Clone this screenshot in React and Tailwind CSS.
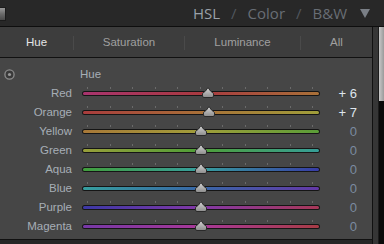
import React from "react";

const rows = [
  { name: "Red", value: 6, grad: "bg-[linear-gradient(90deg,#a8346e,#a83a40,#a87038)]" },
  { name: "Orange", value: 7, grad: "bg-[linear-gradient(90deg,#a83c3c,#a87038,#a09e3a)]" },
  { name: "Yellow", value: 0, grad: "bg-[linear-gradient(90deg,#a87838,#a09e3a,#5a9e38)]" },
  { name: "Green", value: 0, grad: "bg-[linear-gradient(90deg,#989e3a,#4e9e38,#369e98)]" },
  { name: "Aqua", value: 0, grad: "bg-[linear-gradient(90deg,#429e3c,#369e9e,#383ca6)]" },
  { name: "Blue", value: 0, grad: "bg-[linear-gradient(90deg,#369e9e,#3866a6,#6438a6)]" },
  { name: "Purple", value: 0, grad: "bg-[linear-gradient(90deg,#3c38a6,#8238a6,#a83858)]" },
  { name: "Magenta", value: 0, grad: "bg-[linear-gradient(90deg,#7638a6,#a83898,#a83c46)]" },
];

const Thumb = ({ value }) => (
  <svg
    className="absolute top-[3px]"
    style={{ left: 113 + (value / 100) * 119 }}
    width="12"
    height="11"
    viewBox="0 0 12 11"
  >
    <defs>
      <linearGradient id="tg" x1="0" y1="0" x2="0" y2="1">
        <stop offset="0" stopColor="#d6d6d6" />
        <stop offset="1" stopColor="#8c8c8c" />
      </linearGradient>
    </defs>
    <path
      d="M6 0.5 L8.5 4 L11.5 6.5 L11.5 9 Q11.5 10.5 10 10.5 L2 10.5 Q0.5 10.5 0.5 9 L0.5 6.5 L3.5 4 Z"
      fill="url(#tg)"
      stroke="#2a2a2a"
      strokeWidth="1"
    />
  </svg>
);

const SliderRow = ({ row }) => (
  <div className="flex items-center h-[19px]">
    <div className="w-[72px] text-right text-[11.5px] text-[#a6aeb6]">{row.name}</div>
    <div className="relative ml-[10px] w-[238px] h-full flex flex-col justify-center pb-[5px]">
      <div className="flex justify-between pl-[5px] pr-[7px] h-[2px] mb-[2px]">
        {Array.from({ length: 11 }).map((_, i) => (
          <div key={i} className="w-px h-[2px] bg-[#6a6a6a]" />
        ))}
      </div>
      <div className="h-[5px] rounded-full bg-[#151515] p-px">
        <div className={`h-[3px] rounded-full ${row.grad}`} />
      </div>
      <Thumb value={row.value} />
    </div>
    <div
      className={`w-[37px] text-right text-[13px] ${
        row.value !== 0 ? "text-[#dfe5ec]" : "text-[#7b8ba0]"
      }`}
    >
      {row.value > 0 ? `+ ${row.value}` : row.value}
    </div>
  </div>
);

const tabs = [
  { label: "Hue", w: "w-[73px]", active: true },
  { label: "Saturation", w: "w-[111px]" },
  { label: "Luminance", w: "w-[116px]" },
  { label: "All", w: "w-[72px]" },
];

export default function App() {
  return (
    <div className="w-[384px] h-[244px] bg-[#262626] flex flex-col overflow-hidden font-['Liberation_Sans',sans-serif]">
      {/* header */}
      <div className="h-[26px] flex items-center bg-[#282828]">
        <div className="w-[6px] h-[14px] mt-[1px] border border-[#1c1c1c] border-l-0 bg-[linear-gradient(#9a9a9a,#6a6a6a_50%,#4a4a4a)]" />
        <div className="flex-1" />
        <div className="flex items-center gap-[11px] font-['Open_Sans',sans-serif] text-[15px] leading-none">
          <span className="text-[#9aa1a9]">HSL</span>
          <span className="text-[#51575e]">/</span>
          <span className="text-[#686e75]">Color</span>
          <span className="text-[#51575e]">/</span>
          <span className="text-[#686e75]">B&amp;W</span>
        </div>
        <svg className="ml-[13px] mr-[14px]" width="10" height="9" viewBox="0 0 10 9">
          <polygon points="0,0 10,0 5,9" fill="#7a7f86" />
        </svg>
      </div>
      <div className="h-px bg-[#0e0e0e]" />

      <div className="flex flex-1">
        <div className="w-[372px] flex flex-col">
          {/* tabs */}
          <div className="h-[31px] bg-[#3d3d3d] border-b border-[#111] flex items-center pt-[2px]">
            {tabs.map((t, i) => (
              <div key={t.label} className={`${t.w} flex items-center h-full relative`}>
                {i > 0 && <div className="w-px h-[14px] bg-[#2c2c2c] border-r border-[#4a4a4a]" />}
                <div
                  className={`flex-1 text-center text-[11.5px] ${
                    t.active ? "text-[#e6e6e6]" : "text-[#a0a0a0]"
                  }`}
                >
                  {t.label}
                </div>
              </div>
            ))}
          </div>

          {/* content */}
          <div className="h-[182px] bg-[#464646] border-b border-[#111] pt-[7px]">
            <div className="flex items-center h-[19px]">
              <svg className="ml-[4px]" width="11" height="11" viewBox="0 0 11 11">
                <circle cx="5.5" cy="5.5" r="4.6" fill="#3a3a3a" stroke="#8c8c8c" strokeWidth="1.3" />
                <circle cx="5.5" cy="5.5" r="1.6" fill="#9a9a9a" />
              </svg>
              <div className="ml-[65px] text-[11.5px] text-[#a6aeb6]">Hue</div>
            </div>
            {rows.map((r) => (
              <SliderRow key={r.name} row={r} />
            ))}
          </div>
        </div>

        {/* right edge */}
        <div className="w-px bg-[#111]" />
        <div className="w-[5px] bg-[#363636]" />
        <div className="w-px bg-[#1c1c1c]" />
        <div className="flex-1 flex flex-col">
          <div className="h-[74px] bg-[linear-gradient(90deg,#c8c8c8,#9a9a9a)]" />
          <div className="flex-1 bg-[#0a0a0a]" />
        </div>
      </div>
    </div>
  );
}
